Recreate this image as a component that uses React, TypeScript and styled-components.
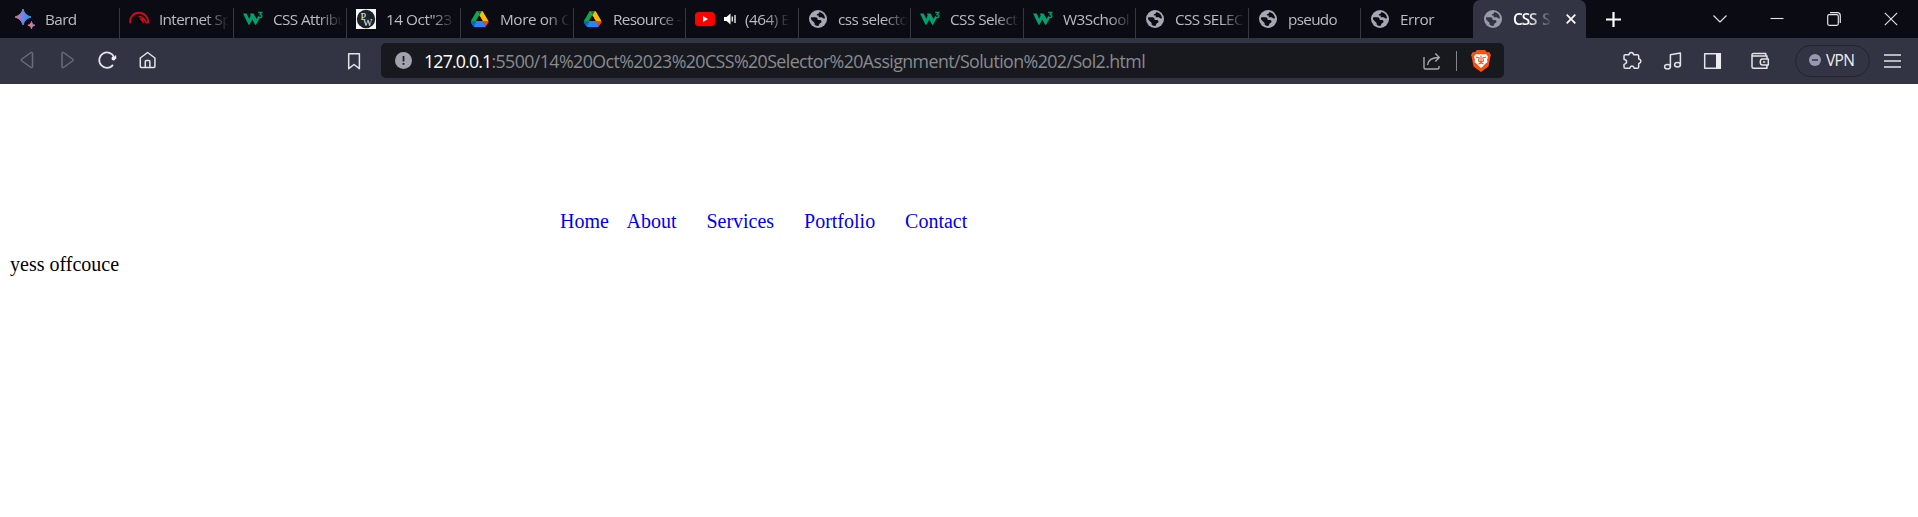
import React from "react";
import styled, { createGlobalStyle } from "styled-components";

const GlobalStyle = createGlobalStyle`
  html, body { margin: 0; background: #fff; }
  * { box-sizing: border-box; }
`;

const ui = `"Open Sans", "Noto Sans", sans-serif`;

const Window = styled.div`
  width: 1918px;
  height: 517px;
  overflow: hidden;
  background: #fff;
`;

const TabStrip = styled.div`
  display: flex;
  height: 38px;
  padding-left: 6px;
  background: #0b0b14;
`;

const Tab = styled.div<{ $w: number; $active?: boolean; $line?: boolean }>`
  display: flex;
  align-items: center;
  flex: none;
  width: ${(p) => p.$w}px;
  height: 38px;
  padding-left: ${(p) => (p.$line || p.$active ? 9 : 8)}px;
  border-left: ${(p) => (p.$active ? 0 : 1)}px solid;
  border-image: linear-gradient(transparent 9px, ${(p) => (p.$line ? "#38383c" : "transparent")} 9px) 1;
  ${(p) => p.$active && "background: #323443; border-radius: 7px 7px 0 0; padding-left: 10px;"}
`;

const Favicon = styled.span`
  display: flex;
  flex: none;
  width: 20px;
  height: 20px;
  margin-right: 10px;
  svg { display: block; }
`;

const Speaker = styled.svg`
  flex: none;
  margin: 0 9px 0 -1px;
`;

const Label = styled.span<{ $ls: number; $active?: boolean; $w?: number }>`
  flex: none;
  width: ${(p) => p.$w ?? 70}px;
  padding-bottom: 1px;
  white-space: nowrap;
  font: ${(p) => (p.$active ? 600 : 400)} 15.3px/20px ${ui};
  letter-spacing: ${(p) => p.$ls}px;
  color: ${(p) => (p.$active ? "#fff" : "#bcbcc0")};
  mask-image: linear-gradient(to right, #000 calc(100% - 24px), transparent);
`;

const CloseTab = styled.svg`
  margin-left: 14px;
`;

const NewTab = styled.div`
  display: flex;
  align-items: center;
  padding-left: 20px;
`;

const Controls = styled.div`
  display: flex;
  align-items: center;
  gap: 43px;
  margin-left: auto;
  padding-right: 20px;
`;

const Toolbar = styled.div`
  display: flex;
  align-items: center;
  height: 46px;
  background: #323443;
  svg { display: block; flex: none; }
`;

const NavButtons = styled.div`
  display: flex;
  align-items: center;
  gap: 20px;
  width: 344px;
  padding: 0 0 2px 17px;
`;

const Bookmark = styled.div`
  width: 37px;
  padding-bottom: 1px;
`;

const AddressBar = styled.div`
  display: flex;
  align-items: center;
  width: 1123px;
  height: 35px;
  margin-bottom: 1px;
  padding: 0 13px 0 14px;
  border-radius: 5px;
  background: #17191f;
`;

const Url = styled.span`
  flex: 1;
  margin-left: 12px;
  font: 17.8px/24px ${ui};
  letter-spacing: -0.58px;
  color: #898b8f;
  white-space: nowrap;
`;

const Host = styled.span`
  letter-spacing: -0.85px;
  color: #fff;
`;

const Divider = styled.span`
  width: 1px;
  height: 20px;
  margin: 0 14px 0 15px;
  background: #85868a;
`;

const Tools = styled.div`
  display: flex;
  align-items: center;
  margin-left: 118px;
  padding-bottom: 1px;
`;

const Tool = styled.span<{ $w: number }>`
  width: ${(p) => p.$w}px;
`;

const Vpn = styled.div`
  display: flex;
  align-items: center;
  gap: 5px;
  width: 75px;
  height: 32px;
  margin-right: 14px;
  padding: 0 0 1px 13px;
  border: 1px solid #22232d;
  border-radius: 16px;
  font: 15.5px/20px ${ui};
  letter-spacing: -0.7px;
  color: #ededf0;
`;

const Page = styled.main`
  padding: 126px 10px 0;
  font: 20px/23px "Liberation Serif", serif;
  color: #000;
`;

const Menu = styled.nav`
  display: flex;
  gap: 29.9px;
  padding-left: 550px;
`;

const MenuLink = styled.a<{ $tight?: boolean }>`
  margin-right: ${(p) => (p.$tight ? -12.3 : 0)}px;
  color: #0000ee;
  text-decoration: none;
`;

const Note = styled.p`
  margin: 20px 0 0;
`;

const Globe = ({ c = "#a5a8b2", bg = "#0b0b14" }) => (
  <svg width="20" height="20" viewBox="0 0 20 20">
    <circle cx="10" cy="10" r="9" fill={c} />
    <path
      d="M3.2 8.3h4.1c1.8 0 2.4 1.2 2.4 2.6h1.8c1.4 0 2 .7 2 1.7s-.7 1.5-1.7 1.6l-1.4 2.7c-4 .2-7.2-2.9-7.4-6.8zM11.3 3.1c3.1.5 5.3 2.7 5.7 5.8-1 .9-2.5.5-2.9-.6H10.7V6.6H8.9V5.2c1.4 0 2.2-.7 2.4-2.1z"
      fill={bg}
    />
    <path d="M2.900 10.300 6.600 14v1.500l1.500 1.300C4.700 16 2.700 13.500 2.900 10.300z" fill={c} />
  </svg>
);

const Bard = () => (
  <svg width="20" height="20" viewBox="0 0 20 20">
    <defs>
      <linearGradient id="bard" x1="0" x2="1">
        <stop offset="0" stopColor="#e2747b" />
        <stop offset=".4" stopColor="#8a80dc" />
        <stop offset=".75" stopColor="#2f95f0" />
        <stop offset="1" stopColor="#3fa0df" />
      </linearGradient>
      <linearGradient id="bardSmall" x1="0" x2="1">
        <stop offset="0" stopColor="#ef7d6c" />
        <stop offset="1" stopColor="#a07be0" />
      </linearGradient>
    </defs>
    <path d="M8 0c1.400 4.500 3.500 6.600 8 8-4.500 1.400-6.600 3.500-8 8C6.600 11.500 4.500 9.400 0 8c4.500-1.400 6.600-3.500 8-8z" fill="url(#bard)" stroke="url(#bard)" strokeWidth="1" />
    <path d="M16.500 12.500c.5 2.200 1.300 3 3.500 3.700-2.200.6-3 1.500-3.500 3.700-.6-2.200-1.400-3.100-3.600-3.700 2.200-.7 3-1.500 3.600-3.700z" fill="url(#bardSmall)" stroke="url(#bardSmall)" strokeWidth=".9" />
  </svg>
);

const Speed = () => (
  <svg width="20" height="20" viewBox="0 0 20 20" fill="none" stroke="#cf0a1c" strokeWidth="1.900">
    <path d="M1.300 14C.3 8 4.800 3.800 10 3.800S19.700 8 19.200 14" />
    <path d="M9.500 7.500c4 0 6.500 2.200 7.200 6.500M12 8.500l6.500 5.500M10.500 10c2.200.4 3.300 1.700 3.800 4" strokeWidth="1.400" />
    <path d="M9 8.500V14h4.500z" fill="#000" stroke="none" />
  </svg>
);

const W3 = () => (
  <svg width="20" height="20" viewBox="0 0 20 20">
    <path d="M0 4.500h3.700l2.500 5.300 1.500-3.300-.8-2h3.700l3 5.500 1.500-2.800 1.900 1.500-4 7h-.9L9.300 10.500 6.500 15.700h-1z" fill="#049f6d" />
    <path d="M15.200 3.300h3.500l-1.600 2.200c2.500 0 2.400 3.300-.1 3-.8 0-1.300-.4-1.700-1" fill="none" stroke="#049f6d" strokeWidth="1.300" />
  </svg>
);

const Drive = () => (
  <svg width="20" height="20" viewBox="0 0 20 20">
    <path d="M6.700 2h5L6 11.800 3.400 17.500 1 13.200Q.6 12.500 1 11.800z" fill="#0aa650" />
    <path d="M6.700 2h5.200q.8 0 1.300 1l5.200 9h-5.700z" fill="#ffba00" />
    <path d="M6.700 2h5.200l-2.300 4.300z" fill="#00832d" />
    <path d="M1 12h5.200l-2.500 5.500q-.7-.3-1-1L1 13.500z" fill="#0066da" />
    <path d="M6.200 12h7l2.600 5.500q-.5.500-1.300.5H4.700q-.6 0-1-.4z" fill="#2684fc" />
    <path d="M12.700 12h5.800q.3.700-.1 1.400l-2.600 4.200z" fill="#ea4335" />
    <path d="M9.600 6.800 12.500 12H6.600z" fill="#0b0b14" />
  </svg>
);

const Youtube = () => (
  <svg width="20" height="20" viewBox="0 0 20 20">
    <rect y="3" width="20" height="14" rx="3.500" fill="#f00" />
    <path d="M8 7v6l5-3z" fill="#fff" />
  </svg>
);

const PwBadge = () => (
  <svg width="20" height="20" viewBox="0 0 20 20">
    <rect width="20" height="20" fill="#f7f7f7" />
    <circle cx="10" cy="10" r="9.200" fill="#1c2326" />
    <g fill="#e9eeee" fontFamily="Liberation Serif">
      <text x="4.500" y="10.500" fontSize="10">P</text>
      <text x="7" y="16.500" fontSize="10">W</text>
    </g>
  </svg>
);

type TabData = { w: number; title: string; icon: React.ReactNode; ls: number; audio?: boolean };

const tabs: TabData[] = [
  { w: 113, title: "Bard", icon: <Bard />, ls: -0.6 },
  { w: 114, title: "Internet Sp", icon: <Speed />, ls: -0.65 },
  { w: 113, title: "CSS Attribu", icon: <W3 />, ls: -0.6 },
  { w: 114, title: "14 Oct\"23", icon: <PwBadge />, ls: -0.45 },
  { w: 113, title: "More on C", icon: <Drive />, ls: -0.4 },
  { w: 112, title: "Resource -", icon: <Drive />, ls: -0.7 },
  { w: 113, title: "(464) E", icon: <Youtube />, ls: -0.5, audio: true },
  { w: 112, title: "css selecto", icon: <Globe />, ls: -0.55 },
  { w: 113, title: "CSS Select", icon: <W3 />, ls: -0.55 },
  { w: 112, title: "W3School", icon: <W3 />, ls: -0.5 },
  { w: 113, title: "CSS SELEC", icon: <Globe />, ls: -0.6 },
  { w: 112, title: "pseudo", icon: <Globe />, ls: -0.7 },
  { w: 113, title: "Error", icon: <Globe />, ls: -0.5 },
];

const line = { fill: "none", stroke: "#e4e4e8", strokeWidth: 1.5, strokeLinejoin: "round" as const };

export default function App() {
  return (
    <Window>
      <GlobalStyle />
      <TabStrip>
        {tabs.map((t, i) => (
          <Tab key={i} $w={t.w} $line={i > 0}>
            <Favicon>{t.icon}</Favicon>
            {t.audio && (
              <Speaker width="12" height="12" viewBox="0 0 12 12">
                <path d="M0 4h2.500L6.500.5v11L2.500 8H0z" fill="#fff" />
                <path d="M8.300 3.500v5M11 2v8" stroke="#ddd" strokeWidth="1.500" />
              </Speaker>
            )}
            <Label $ls={t.ls} $w={t.audio ? 45 : 70}>{t.title}</Label>
          </Tab>
        ))}
        <Tab $w={113} $active>
          <Favicon><Globe c="#999ca7" bg="#323443" /></Favicon>
          <Label $active $ls={-1.05} $w={39}>CSS&nbsp; S</Label>
          <CloseTab width="10" height="10" viewBox="0 0 10 10">
            <path d="M.7.700 9.300 9.300M9.300.7.700 9.300" stroke="#fff" strokeWidth="1.700" />
          </CloseTab>
        </Tab>
        <NewTab>
          <svg width="15" height="15" viewBox="0 0 15 15">
            <path d="M7.500 0v15M0 7.500h15" stroke="#fff" strokeWidth="2.200" />
          </svg>
        </NewTab>
        <Controls>
          <svg width="14" height="14" viewBox="0 0 14 14"><path d="M.5 3.500 7 10 13.500 3.500" {...line} strokeWidth={1.1} /></svg>
          <svg width="14" height="14" viewBox="0 0 14 14"><path d="M.5 6.500h13" {...line} strokeWidth={1.1} /></svg>
          <svg width="14" height="14" viewBox="0 0 14 14">
            <rect x=".7" y="2.700" width="10.600" height="10.600" rx="1.500" {...line} strokeWidth={1.2} />
            <path d="M3 .7h7.300a3 3 0 0 1 3 3V11" {...line} strokeWidth={1.2} />
          </svg>
          <svg width="14" height="14" viewBox="0 0 14 14"><path d="M.8.800 13.200 13.200M13.200.8.800 13.200" {...line} strokeWidth={1.1} /></svg>
        </Controls>
      </TabStrip>

      <Toolbar>
        <NavButtons>
          <svg width="20" height="20" viewBox="0 0 20 20"><path d="M14 2.500Q15.500 2 15.500 3.500v13q0 1.500-1.500 1L5 11Q3.700 10 5 9z" {...line} stroke="#6b6c78" /></svg>
          <svg width="20" height="20" viewBox="0 0 20 20"><path d="M6.500 2.500Q5 2 5 3.500v13q0 1.500 1.500 1L15.500 11q1.300-1 0-2z" {...line} stroke="#6b6c78" /></svg>
          <svg width="20" height="20" viewBox="0 0 20 20">
            <path d="M16 14.900A7.700 7.700 0 1 1 17.200 7.500" {...line} strokeWidth={1.7} />
            <circle cx="16.500" cy="8.600" r="2" fill="#f0f0f3" />
            <path d="M18.500 5.500V9" {...line} />
          </svg>
          <svg width="20" height="20" viewBox="0 0 20 20"><path d="M3.300 8v8.500q0 1 1 1h12.600q1 0 1-1V8l-7.300-5.500zM8.300 17V11.500q0-1 1-1h2.600q1 0 1 1V17" {...line} /></svg>
        </NavButtons>
        <Bookmark>
          <svg width="20" height="20" viewBox="0 0 20 20"><path d="M4.700 2.700h10.700v15L10 13.500l-5.300 4.200z" {...line} /></svg>
        </Bookmark>
        <AddressBar>
          <svg width="17" height="17" viewBox="0 0 17 17">
            <circle cx="8.500" cy="8.500" r="8.500" fill="#a0a2ae" />
            <path d="M8.500 4v5.500M8.500 11v1.700" stroke="#17191f" strokeWidth="1.700" />
          </svg>
          <Url><Host>127.0.0.1</Host>:5500/14%20Oct%2023%20CSS%20Selector%20Assignment/Solution%202/Sol2.html</Url>
          <svg width="18" height="18" viewBox="0 0 18 18" fill="none" stroke="#a8a9ac" strokeWidth="1.400">
            <path d="M1 5v10.500q0 1.500 1.500 1.500h12q1.500 0 1.500-1.500V14M4.500 13C5 8 8.500 5.500 16 5.500M12.300 1.500l4 4-4 4" />
          </svg>
          <Divider />
          <svg width="20" height="22" viewBox="0 0 20 22">
            <path d="M6 0h8l2 2.200 2.200-.2L20 5l-.7 2L17.500 16.500 10 22 2.500 16.500.7 7 0 5l1.800-3L4 2.200z" fill="#fb5010" />
            <path d="m5 4 3 .5L10 4l2 .5 3-.5 2 2.500-1 3.500.5 2-3 2.500-1.200 1.500L10 18l-2.300-2-1.200-1.500-3-2.500.5-2-1-3.500z" fill="#fff" />
            <path d="m4.800 7 3.400.8-.7 3.200 2.500 1.300 2.500-1.300-.7-3.200 3.400-.8M7.500 14l2.500-1 2.500 1M10 5.500v6.500" fill="none" stroke="#fb5010" strokeWidth="1.100" />
          </svg>
        </AddressBar>
        <Tools>
          <Tool $w={41}>
            <svg width="20" height="20" viewBox="0 0 20 20"><path d="M3.300 3.800H7q.2-2.300 2.300-2.300t2.300 2.300h3.600q1.500 0 1.500 1.500v2.500q2.200.8 2.200 2.400t-2.200 2.500v3q0 1.600-1.500 1.600h-2.900q-.5-2.200-2.300-2.200t-2.300 2.200H3.300q-1.300 0-1.300-1.400v-2.500q2.600-.8 2.600-2.700T2 8.200V5.100q0-1.300 1.300-1.300z" {...line} /></svg>
          </Tool>
          <Tool $w={39}>
            <svg width="20" height="20" viewBox="0 0 20 20"><ellipse cx="4.500" cy="15.700" rx="2.900" ry="2.200" {...line} /><ellipse cx="14.500" cy="13.700" rx="2.900" ry="2.200" {...line} /><path d="M7.400 15.700V3.800l10-1.800v11.700" {...line} /></svg>
          </Tool>
          <Tool $w={48}>
            <svg width="20" height="20" viewBox="0 0 20 20"><rect x="2.700" y="2.700" width="15.600" height="14.600" {...line} /><path d="M14 2.200h5v15.600h-5z" fill="#ececf0" /></svg>
          </Tool>
          <Tool $w={45}>
            <svg width="20" height="20" viewBox="0 0 20 20"><path d="M17 8V5H3.500Q2 5 2 3.700T3.500 2.500h12.300V5M2 3.700v12q0 1.500 1.500 1.500H17V14M18.300 8h-6Q10.300 8 10.300 11t2 3h6zM13 11h2.300" {...line} /></svg>
          </Tool>
          <Vpn>
            <svg width="12" height="12" viewBox="0 0 12 12"><circle cx="6" cy="6" r="6" fill="#9898b0" /><path d="M3 6h6" stroke="#323443" strokeWidth="1.500" /></svg>
            VPN
          </Vpn>
          <svg width="17" height="14" viewBox="0 0 17 14"><path d="M0 1h17M0 7h17M0 13h17" {...line} /></svg>
        </Tools>
      </Toolbar>

      <Page>
        <Menu>
          <MenuLink $tight>Home</MenuLink>
          <MenuLink>About</MenuLink>
          <MenuLink>Services</MenuLink>
          <MenuLink>Portfolio</MenuLink>
          <MenuLink>Contact</MenuLink>
        </Menu>
        <Note>yess offcouce</Note>
      </Page>
    </Window>
  );
}
